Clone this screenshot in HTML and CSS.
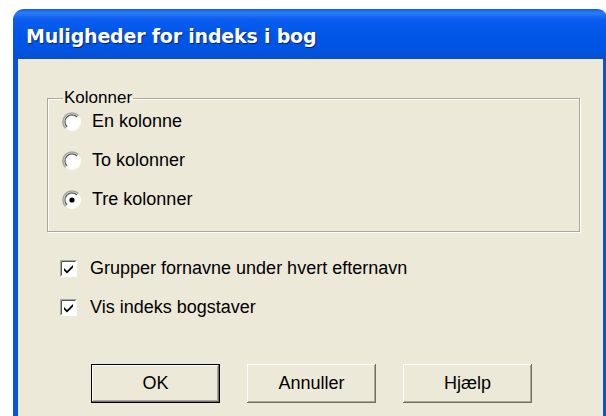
FILE: index.html
```html
<!DOCTYPE html>
<html lang="da">
<head>
<meta charset="utf-8">
<title>Muligheder for indeks i bog</title>
<link rel="stylesheet" href="styles.css">
</head>
<body>
<div class="window">
  <div class="titlebar"><span class="title">Muligheder for indeks i bog</span></div>
  <div class="client">
    <fieldset class="group">
      <legend class="group-label">Kolonner</legend>
      <div class="options">
        <label class="option">
          <svg class="radio" width="20" height="20" viewBox="0 0 20 20"><circle cx="10" cy="10" r="9" fill="#fff"/><path d="M3.6 16.4A9 9 0 0 1 16.4 3.6" fill="none" stroke="#a7a69c" stroke-width="1.6"/><path d="M5 15A7 7 0 0 1 15 5" fill="none" stroke="#555" stroke-width="1.2"/></svg>
          <span>En kolonne</span>
        </label>
        <label class="option">
          <svg class="radio" width="20" height="20" viewBox="0 0 20 20"><circle cx="10" cy="10" r="9" fill="#fff"/><path d="M3.6 16.4A9 9 0 0 1 16.4 3.6" fill="none" stroke="#a7a69c" stroke-width="1.6"/><path d="M5 15A7 7 0 0 1 15 5" fill="none" stroke="#555" stroke-width="1.2"/></svg>
          <span>To kolonner</span>
        </label>
        <label class="option">
          <svg class="radio" width="20" height="20" viewBox="0 0 20 20"><circle cx="10" cy="10" r="9" fill="#fff"/><path d="M3.6 16.4A9 9 0 0 1 16.4 3.6" fill="none" stroke="#a7a69c" stroke-width="1.6"/><path d="M5 15A7 7 0 0 1 15 5" fill="none" stroke="#555" stroke-width="1.2"/><circle cx="10" cy="10" r="2.6" fill="#000"/></svg>
          <span>Tre kolonner</span>
        </label>
      </div>
    </fieldset>

    <div class="checks">
      <label class="check">
        <svg class="box" width="17" height="17" viewBox="0 0 17 17"><rect x="0" y="0" width="17" height="17" fill="#fff"/><path d="M0.5 16.5V0.5H16.5" fill="none" stroke="#a7a69c"/><path d="M1.5 15.5V1.5H15.5" fill="none" stroke="#555"/><path d="M4 8l3 3 6-6v2.6l-6 6-3-3z" fill="#000"/></svg>
        <span>Grupper fornavne under hvert efternavn</span>
      </label>
      <label class="check">
        <svg class="box" width="17" height="17" viewBox="0 0 17 17"><rect x="0" y="0" width="17" height="17" fill="#fff"/><path d="M0.5 16.5V0.5H16.5" fill="none" stroke="#a7a69c"/><path d="M1.5 15.5V1.5H15.5" fill="none" stroke="#555"/><path d="M4 8l3 3 6-6v2.6l-6 6-3-3z" fill="#000"/></svg>
        <span>Vis indeks bogstaver</span>
      </label>
    </div>

    <div class="buttons">
      <button class="btn default">OK</button>
      <button class="btn">Annuller</button>
      <button class="btn">Hjælp</button>
    </div>
  </div>
</div>
</body>
</html>
```

FILE: styles.css
```css
html, body {
  margin: 0;
  padding: 0;
  background: #fff;
  overflow: hidden;
  width: 606px;
  height: 416px;
}

.window {
  margin: 9px 0 0 13px;
  width: 595px;
}

.titlebar {
  height: 50px;
  box-sizing: border-box;
  border-radius: 11px 11px 0 0;
  background: linear-gradient(to bottom, #0a5fe8 0%, #2c7cf5 8%, #0c5ef0 20%, #0056e6 50%, #0054e3 80%, #0a4fcf 100%);
  padding: 16px 0 0 13px;
}

.title {
  font-family: "DejaVu Sans", sans-serif;
  font-weight: bold;
  font-size: 19px;
  letter-spacing: -0.2px;
  color: #fff;
  text-shadow: 1px 1px 0 #0a1f6e;
}

.client {
  background: #ece9d8;
  border-left: 5px solid #0855dd;
  border-right: 5px solid #0855dd;
  height: 360px;
  width: 595px;
  padding: 29px 0 0 29px;
  box-sizing: border-box;
  font-family: "Liberation Sans", sans-serif;
  font-size: 18px;
  color: #000;
}

.group {
  margin: 0;
  width: 533px;
  height: 144px;
  box-sizing: border-box;
  border: 1px solid #aca899;
  box-shadow: inset 1px 1px 0 #fff, 1px 1px 0 #fff;
  padding: 0 0 0 14px;
}

.group-label {
  padding: 0 1px;
  margin-left: 1px;
  line-height: 20px;
  font-size: 17px;
}

.options {
  margin-top: -6px;
}

.option {
  display: flex;
  align-items: center;
  gap: 10px;
  height: 39px;
}

.checks {
  margin-top: 17px;
  padding-left: 13px;
}

.check {
  display: flex;
  align-items: center;
  gap: 13px;
  height: 39px;
}

.buttons {
  display: flex;
  gap: 27px;
  margin-top: 37px;
  padding-left: 44px;
}

.btn {
  width: 129px;
  height: 39px;
  font-family: "Liberation Sans", sans-serif;
  font-size: 18px;
  color: #000;
  background: #ece9d8;
  border: none;
  box-shadow: inset -1px -1px 0 #716f64, inset 1px 1px 0 #fff, inset -2px -2px 0 #aca899;
  padding: 0;
}

.btn.default {
  box-shadow: inset 0 0 0 1px #000, inset -2px -2px 0 #716f64, inset 2px 2px 0 #fff, inset -3px -3px 0 #aca899;
}
```
